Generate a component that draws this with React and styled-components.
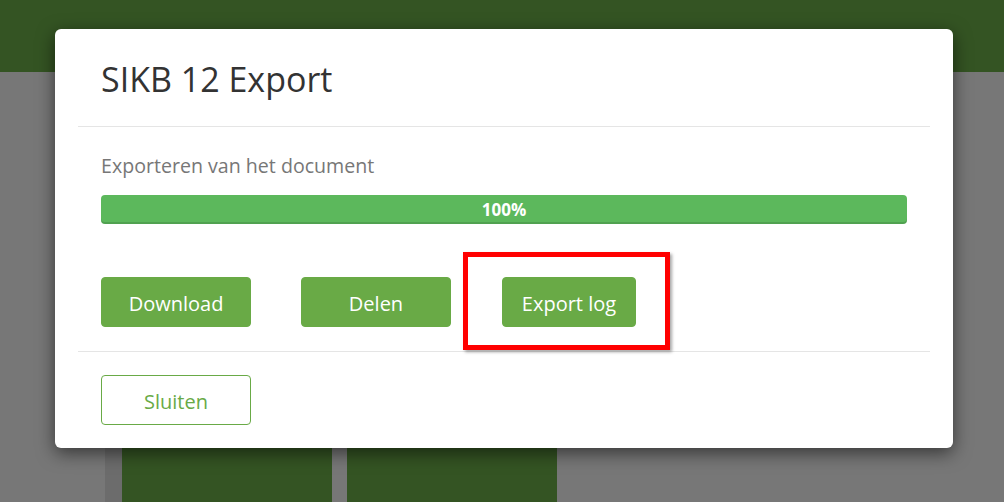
import React from 'react';
import styled, { createGlobalStyle } from 'styled-components';

const GlobalStyle = createGlobalStyle`
    html, body {
        margin: 0;
        padding: 0;
        overflow: hidden;
    }
    body {
        font-family: "Open Sans", "Noto Sans", sans-serif;
    }
`

const Page = styled.div`
    position: relative;
    display: flex;
    flex-direction: column;
    width: 1004px;
    height: 502px;
    background: #777777;
    overflow: hidden;
`

const TopBar = styled.div`
    height: 72px;
    background: #345423;
`

const Backdrop = styled.div`
    flex: 1;
    display: flex;
    align-items: flex-end;
    padding-left: 105px;
`

const Gutter = styled.div`
    width: 17px;
    height: 100%;
    background: #6c6c6c;
`

const Tile = styled.div`
    width: 210px;
    height: 110px;
    margin-right: 15px;
    background: #345423;
`

const Modal = styled.div`
    position: absolute;
    left: 55px;
    top: 29px;
    width: 898px;
    height: 419px;
    display: flex;
    flex-direction: column;
    background: #ffffff;
    border-radius: 6px;
    box-shadow: 0 5px 18px rgba(0, 0, 0, 0.55);
`

const Header = styled.div`
    display: flex;
    align-items: center;
    height: 97px;
    margin: 0 23px;
    padding: 0 23px;
    border-bottom: 1px solid #e5e5e5;
`

const Title = styled.h2`
    margin: 0;
    padding-top: 2px;
    font-size: 34px;
    font-weight: 400;
    color: #333333;
`

const Body = styled.div`
    display: flex;
    flex-direction: column;
    margin: 0 23px;
    padding: 26px 23px 24px;
    border-bottom: 1px solid #e5e5e5;
`

const Subtitle = styled.p`
    margin: 0 0 16px;
    font-size: 19.6px;
    line-height: 26px;
    color: #777777;
`

const Progress = styled.div`
    display: flex;
    align-items: center;
    justify-content: center;
    height: 29px;
    border-radius: 4px;
    background: #5cb85c;
    box-shadow: inset 0 -2px 0 rgba(0, 0, 0, 0.12);
    color: #ffffff;
    font-size: 17px;
    font-weight: 700;
`

const ButtonRow = styled.div`
    display: flex;
    gap: 50px;
    margin-top: 53px;
`

const Button = styled.button`
    display: flex;
    align-items: center;
    justify-content: center;
    width: ${props => props.width || 150}px;
    height: 50px;
    padding: 2px 0 0;
    border: 1px solid #69aa46;
    border-radius: 4px;
    background: ${props => props.outline ? '#ffffff' : '#69aa46'};
    color: ${props => props.outline ? '#69aa46' : '#ffffff'};
    font-family: "Open Sans", "Noto Sans", sans-serif;
    font-size: 20px;
    cursor: pointer;
`

const Highlight = styled.div`
    position: relative;
    margin-left: 1px;

    &::after {
        content: "";
        position: absolute;
        left: -39px;
        top: -25px;
        width: 197px;
        height: 88px;
        border: 5px solid #ff0000;
        box-shadow: 2px 2px 3px rgba(0, 0, 0, 0.35);
        pointer-events: none;
    }
`

const Footer = styled.div`
    display: flex;
    padding: 23px 46px;
`

const App = () => {
    return (
        <Page>
            <GlobalStyle />
            <TopBar />
            <Backdrop>
                <Gutter />
                <Tile />
                <Tile />
            </Backdrop>
            <Modal>
                <Header>
                    <Title>SIKB 12 Export</Title>
                </Header>
                <Body>
                    <Subtitle>Exporteren van het document</Subtitle>
                    <Progress>100%</Progress>
                    <ButtonRow>
                        <Button>Download</Button>
                        <Button>Delen</Button>
                        <Highlight>
                            <Button width={134}>Export log</Button>
                        </Highlight>
                    </ButtonRow>
                </Body>
                <Footer>
                    <Button outline>Sluiten</Button>
                </Footer>
            </Modal>
        </Page>
    );
}

export default App;
